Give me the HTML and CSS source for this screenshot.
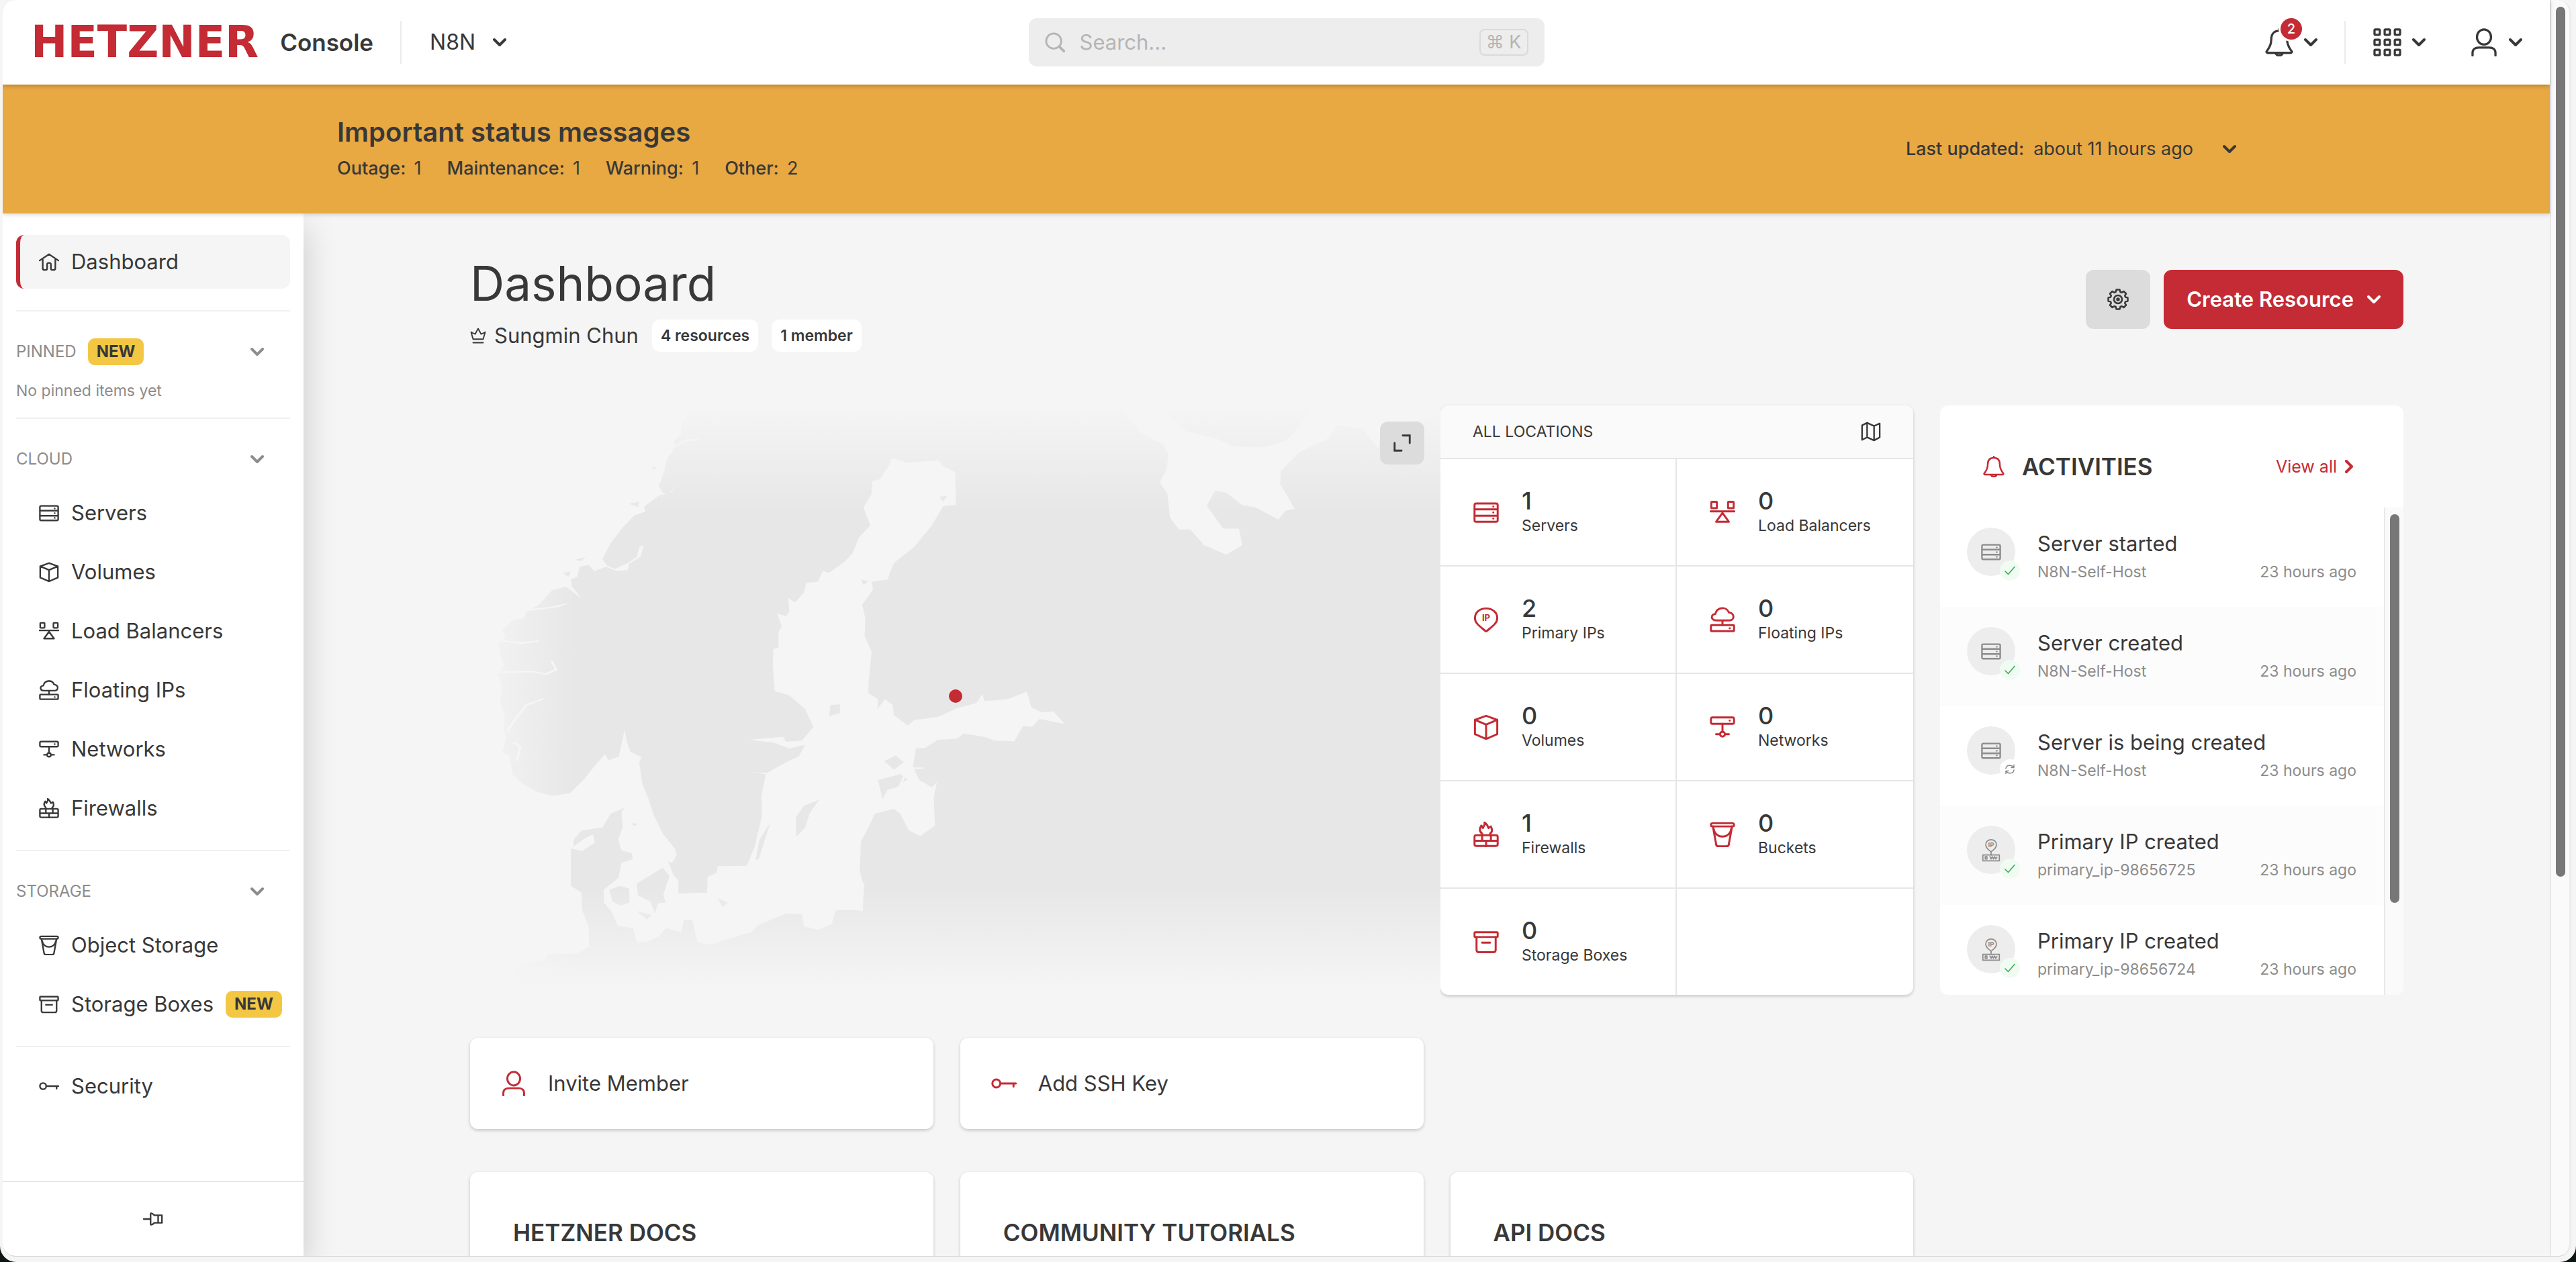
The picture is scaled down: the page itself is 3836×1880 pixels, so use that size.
FILE: index.html
```
<!DOCTYPE html>
<html lang="en">

<head>
    <meta charset="UTF-8">
    <meta name="viewport" content="width=device-width, initial-scale=1.0">
    <title>Hetzner Console</title>
    <link rel="stylesheet" href="styles.css">
</head>

<body>
    <!-- icon set -->
    <svg class="sprite" aria-hidden="true">
        <symbol id="i-chevron" viewBox="0 0 20 20"><path d="M2 6l8 8 8-8" stroke-width="4"/></symbol>
        <symbol id="i-search" viewBox="0 0 32 32"><circle cx="14" cy="14" r="12"/><path d="M23 23l8 8" stroke-width="4"/></symbol>
        <symbol id="i-bell" viewBox="0 0 32 32"><path d="M16 1v2M16 3c-6 0-9 4-9 10 0 7-3 10-5 13-1 1 0 2 1 2h26c1 0 2-1 1-2-2-3-5-6-5-13 0-6-3-10-9-10zM12 28c0 4 8 4 8 0"/></symbol>
        <symbol id="i-grid" viewBox="0 0 32 32"><rect x="1.5" y="1.5" width="6" height="6" rx="1"/><rect x="13" y="1.5" width="6" height="6" rx="1"/><rect x="24.5" y="1.5" width="6" height="6" rx="1"/><rect x="1.5" y="13" width="6" height="6" rx="1"/><rect x="13" y="13" width="6" height="6" rx="1"/><rect x="24.5" y="13" width="6" height="6" rx="1"/><rect x="1.5" y="24.5" width="6" height="6" rx="1"/><rect x="13" y="24.5" width="6" height="6" rx="1"/><rect x="24.5" y="24.5" width="6" height="6" rx="1"/></symbol>
        <symbol id="i-user" viewBox="0 0 32 32"><ellipse cx="16" cy="10" rx="8" ry="8.5"/><path d="M3 31v-3c0-4 3-6 7-6h12c4 0 7 2 7 6v3"/></symbol>
        <symbol id="i-home" viewBox="0 0 32 32"><path d="M1 14L16 4l15 10M6 12v14c0 2 1 3 3 3h2c1 0 2-1 2-2v-7c0-3 6-3 6 0v7c0 1 1 2 2 2h2c2 0 3-1 3-3V12"/></symbol>
        <symbol id="i-server" viewBox="0 0 32 32"><rect x="1.5" y="5" width="29" height="23" rx="2"/><path d="M2 12.500h28M2 20.500h28M25 9h.1M25 16.500h.1M25 24h.1"/></symbol>
        <symbol id="i-volume" viewBox="0 0 32 32"><path d="M16 2l14 5v18l-14 6-14-6V7zM2 7l14 6 14-6M16 13v18"/></symbol>
        <symbol id="i-balancer" viewBox="0 0 32 32"><rect x="2" y="3" width="7" height="8" rx="1"/><rect x="23" y="3" width="7" height="8" rx="1"/><path d="M1 15h30M16 17l8 11H8z"/></symbol>
        <symbol id="i-floating" viewBox="0 0 32 32"><path d="M8 17c-7 0-7-8-1-8 2-9 14-10 17-2 8 1 7 10 1 10zM16 17v6"/><rect x="1.5" y="23" width="29" height="7.5" rx="1"/><path d="M25 27h.1"/></symbol>
        <symbol id="i-network" viewBox="0 0 32 32"><rect x="1.5" y="4" width="29" height="8" rx="2"/><path d="M25 8h.1M16 12v10M8 25h5M19 25h5"/><circle cx="16" cy="25" r="3"/></symbol>
        <symbol id="i-firewall" viewBox="0 0 32 32"><rect x="1.5" y="17" width="29" height="13.5" rx="2"/><path d="M2 24h28M11 17v7M22 17v7M16 24v7M11 15c-4-3-3-7-1-10l2 3c1-3 3-4 2-7 3 2 4 4 5 7l3-2c2 4 2 7-1 9"/></symbol>
        <symbol id="i-bucket" viewBox="0 0 32 32"><rect x="1.5" y="2" width="29" height="4" rx="2"/><path d="M4 6l4 22c0 2 1 3 3 3h10c2 0 3-1 3-3l4-22M5 9c2 13 20 13 22 0"/></symbol>
        <symbol id="i-storage" viewBox="0 0 32 32"><rect x="1.5" y="4" width="29" height="6" rx="1"/><path d="M4 10v16c0 2 1 3 3 3h18c2 0 3-1 3-3V10M11 17h10"/></symbol>
        <symbol id="i-key" viewBox="0 0 32 32"><circle cx="6.5" cy="16" r="5"/><path d="M12 16h19M28 16v4"/></symbol>
        <symbol id="i-pin" viewBox="0 0 32 32"><path d="M1 16h11M12 8v16c0 3 4 0 6-2h12V10H18c-2-2-6-5-6-2zM24 10v12"/></symbol>
        <symbol id="i-crown" viewBox="0 0 32 32"><path d="M6 23L2 9l8 4 6-11 6 11 8-4-4 14zM6 30h20"/></symbol>
        <symbol id="i-gear" viewBox="-16 -16 32 32"><path d="M-3.400-11L-2.500-14.500H2.500L3.400-11 5.400-10.200 8.500-12 12-8.500 10.200-5.400 11-3.400 14.500-2.500V2.500L11 3.400 10.200 5.400 12 8.500 8.500 12 5.400 10.200 3.400 11 2.500 14.500H-2.500L-3.400 11-5.400 10.200-8.500 12-12 8.500-10.200 5.400-11 3.400-14.500 2.500V-2.500L-11-3.400-10.200-5.400-12-8.500-8.500-12-5.400-10.200z"/><circle r="6"/><circle r="1.500"/></symbol>
        <symbol id="i-expand" viewBox="0 0 32 32"><path d="M17 4h11v12M4 16v12h11" stroke-linejoin="miter"/></symbol>
        <symbol id="i-map" viewBox="0 0 32 32"><path d="M2 6l8-4 11 5 9-4v22l-9 5-11-5-8 4zM10 2v23M21 7v23"/></symbol>
        <symbol id="i-check" viewBox="0 0 32 32"><path d="M2 18l9 9L30 5"/></symbol>
        <symbol id="i-sync" viewBox="0 0 32 32"><path d="M4 14C5 3 20 1 27 10M28 3v8h-8M28 18C27 29 12 31 5 22M4 29v-8h8"/></symbol>
    </svg>

    <div class="window">
        <div class="app">
            <header class="topbar">
                <div class="topbar-left">
                    <a class="brand" href="#"><span class="logo">HETZNER</span><span class="product">Console</span></a>
                    <span class="separator"></span>
                    <button class="picker" type="button">N8N <svg class="chevron"><use href="#i-chevron"/></svg></button>
                </div>
                <label class="search">
                    <svg class="icon search-icon"><use href="#i-search"/></svg>
                    <input type="search" placeholder="Search..." aria-label="Search">
                    <kbd>⌘ K</kbd>
                </label>
                <div class="topbar-right">
                    <button class="tool" type="button" aria-label="Notifications">
                        <span class="bell"><svg class="icon"><use href="#i-bell"/></svg><span class="count">2</span></span>
                        <svg class="chevron"><use href="#i-chevron"/></svg>
                    </button>
                    <span class="separator"></span>
                    <button class="tool" type="button" aria-label="Products">
                        <svg class="icon"><use href="#i-grid"/></svg>
                        <svg class="chevron"><use href="#i-chevron"/></svg>
                    </button>
                    <button class="tool" type="button" aria-label="Account">
                        <svg class="icon"><use href="#i-user"/></svg>
                        <svg class="chevron"><use href="#i-chevron"/></svg>
                    </button>
                </div>
            </header>

            <section class="status">
                <div>
                    <h2>Important status messages</h2>
                    <ul class="status-counts">
                        <li>Outage: <span>1</span></li>
                        <li>Maintenance: <span>1</span></li>
                        <li>Warning: <span>1</span></li>
                        <li>Other: <span>2</span></li>
                    </ul>
                </div>
                <button class="status-toggle" type="button">
                    <span>Last updated:</span>
                    <time>about 11 hours ago</time>
                    <svg class="chevron"><use href="#i-chevron"/></svg>
                </button>
            </section>

            <div class="columns">
                <aside class="sidebar">
                    <nav>
                        <div class="group">
                            <a class="item active" href="#"><svg class="icon"><use href="#i-home"/></svg>Dashboard</a>
                        </div>
                        <div class="group">
                            <button class="group-title" type="button">PINNED <span class="new">NEW</span><svg class="chevron"><use href="#i-chevron"/></svg></button>
                            <p class="empty">No pinned items yet</p>
                        </div>
                        <div class="group">
                            <button class="group-title" type="button">CLOUD<svg class="chevron"><use href="#i-chevron"/></svg></button>
                            <a class="item" href="#"><svg class="icon"><use href="#i-server"/></svg>Servers</a>
                            <a class="item" href="#"><svg class="icon"><use href="#i-volume"/></svg>Volumes</a>
                            <a class="item" href="#"><svg class="icon"><use href="#i-balancer"/></svg>Load Balancers</a>
                            <a class="item" href="#"><svg class="icon"><use href="#i-floating"/></svg>Floating IPs</a>
                            <a class="item" href="#"><svg class="icon"><use href="#i-network"/></svg>Networks</a>
                            <a class="item" href="#"><svg class="icon"><use href="#i-firewall"/></svg>Firewalls</a>
                        </div>
                        <div class="group">
                            <button class="group-title" type="button">STORAGE<svg class="chevron"><use href="#i-chevron"/></svg></button>
                            <a class="item" href="#"><svg class="icon"><use href="#i-bucket"/></svg>Object Storage</a>
                            <a class="item" href="#"><svg class="icon"><use href="#i-storage"/></svg>Storage Boxes<span class="new">NEW</span></a>
                        </div>
                        <div class="group">
                            <a class="item" href="#"><svg class="icon"><use href="#i-key"/></svg>Security</a>
                        </div>
                    </nav>
                    <button class="unpin" type="button" aria-label="Collapse menu"><svg class="icon"><use href="#i-pin"/></svg></button>
                </aside>

                <main class="content">
                    <div class="page-head">
                        <div>
                            <h1>Dashboard</h1>
                            <div class="owner">
                                <svg class="icon"><use href="#i-crown"/></svg>
                                <span class="owner-name">Sungmin Chun</span>
                                <span class="pill">4 resources</span>
                                <span class="pill">1 member</span>
                            </div>
                        </div>
                        <div class="actions">
                            <button class="settings" type="button" aria-label="Settings"><svg class="icon"><use href="#i-gear"/></svg></button>
                            <button class="create" type="button">Create Resource <svg class="chevron"><use href="#i-chevron"/></svg></button>
                        </div>
                    </div>

                    <div class="overview">
                        <div class="map">
                            <svg class="map-drawing" viewBox="21 41 1532 1493" preserveAspectRatio="none" aria-hidden="true">
                                <defs>
                                    <linearGradient id="fade-top" x1="0" y1="0" x2="0" y2="1"><stop offset="0" stop-color="#f5f5f5"/><stop offset="1" stop-color="#f5f5f5" stop-opacity="0"/></linearGradient>
                                    <linearGradient id="fade-bottom" x1="0" y1="1" x2="0" y2="0"><stop offset="0" stop-color="#f5f5f5"/><stop offset="1" stop-color="#f5f5f5" stop-opacity="0"/></linearGradient>
                                    <linearGradient id="fade-left" x1="0" y1="0" x2="1" y2="0"><stop offset="0" stop-color="#f5f5f5"/><stop offset="1" stop-color="#f5f5f5" stop-opacity="0"/></linearGradient>
                                </defs>
                                <path class="land" d="M375 41L355 85 354 115 344 130 340 160 332 175 328 205 319 245 325 262 334 267 348 240 338 262 318 270 296 297 298 310 280 320 262 350 243 390 230 430 238 448 250 455 270 440 284 425 288 400 295 395 290 425 272 442 270 458 252 460 236 450 217 460 208 445 194 450 190 475 180 482 182 500 197 530 172 500 150 510 130 545 118 556 145 552 178 541 160 552 110 562 106 580 88 585 72 610 77 625 66 645 70 680 75 700 66 720 72 760 68 790 76 830 73 860 78 880 72 920 84 930 88 975 104 1000 127 1020 150 1030 178 1024 200 990 220 950 234 925 240 940 256 930 262 885 265 862 268 890 274 918 292 932 288 945 293 1000 302 1035 310 1075 325 1125 345 1165 347 1180 340 1200 334 1196 342 1230 350 1245 350 1278 380 1275 395 1276 396 1235 410 1225 412 1208 458 1207 470 1160 482 1080 481 1030 488 975 465 970 490 972 520 945 540 930 550 900 525 910 500 895 462 888 515 880 520 893 545 890 563 855 550 810 525 775 502 765 499 700 500 658 508 655 508 615 513 600 506 568 520 575 525 562 523 528 534 540 548 515 552 490 570 488 578 460 588 465 612 437 625 415 635 375 653 345 642 300 655 265 656 232 668 228 684 190 687 175 712 186 760 180 768 195 787 210 788 293 768 296 750 345 722 400 690 440 680 482 655 488 657 508 640 545 645 580 644 625 655 665 650 745 650 770 665 785 664 810 676 785 688 800 690 825 712 852 722 838 760 830 790 808 820 795 830 772 833 790 870 785 900 766 907 805 922 818 942 816 960 848 920 835 908 855 894 853 880 892 850 890 832 880 800 872 790 885 760 888 740 908 725 910 720 955 730 990 750 1008 758 995 753 1035 755 1105 732 1132 714 1118 700 1075 690 1063 660 1075 650 1110 638 1145 636 1220 643 1258 641 1322 620 1318 598 1320 592 1355 570 1369 548 1360 545 1330 520 1328 475 1358 465 1375 400 1407 380 1400 372 1345 358 1345 355 1375 330 1365 320 1385 300 1400 285 1402 278 1365 255 1360 243 1320 232 1300 232 1268 255 1238 260 1200 278 1190 276 1175 260 1168 255 1140 262 1110 260 1070 265 1060 243 1075 230 1110 197 1118 185 1140 184 1158 205 1135 215 1128 218 1148 198 1170 180 1163 180 1258 197 1275 198 1320 208 1360 209 1412 190 1430 145 1430 140 1445 95 1460 90 1534H1553V41z"/>
                                <path class="land" d="M572 1040L548 1055 535 1085 536 1133 550 1110 557 1075zM495 1098L478 1140 472 1192 477 1190zM665 990L700 975 712 988 695 1008 680 1015 672 1038 668 1010zM675 942L693 928 706 945 690 964zM284 1252L325 1212 336 1232 326 1280 330 1300 318 1302 313 1328 306 1298 286 1282zM241 1268L258 1258 272 1265 273 1300 258 1308 246 1298zM412 1290L428 1300 420 1312zM590 800L605 798 605 820 588 828zM272 290L288 285 286 298zM186 432L203 425 197 435zM762 272L774 270 768 285zM276 1100L286 1100 281 1107zM308 195L316 197 311 205zM168 465L180 462 176 476zM638 482L650 486 642 496zM284 1322L308 1332 300 1343z"/>
                                <path class="water" d="M1045 41L1080 110 1115 140 1124 165 1120 205 1110 235 1122 265 1126 325 1140 355 1158 355 1180 395 1215 419 1240 395 1235 353 1210 353 1184 295 1197 257 1215 262 1240 293 1262 300 1297 330 1308 308 1323 303 1300 240 1301 207 1330 160 1375 125 1390 92 1430 100 1455 150 1460 90 1553 70V41z"/>
                                <path class="land" d="M1110 41L1150 105 1200 125 1225 145 1275 147 1310 130 1335 85 1350 41z"/>
                                <path class="fjord" d="M72 637L100 643 128 638M62 717L120 715 140 722 157 710 150 690M80 865L95 830 110 800 135 785M95 940L100 905 90 895M338 150L362 130 380 127M642 1255L622 1312M700 1005L712 960 735 960"/>
                                <rect x="21" y="41" width="1532" height="265" fill="url(#fade-top)"/>
                                <rect x="21" y="1260" width="1532" height="262" fill="url(#fade-bottom)"/>
                                <rect x="21" y="1520" width="1532" height="20" fill="#f5f5f5"/>
                                <rect x="21" y="41" width="165" height="1493" fill="url(#fade-left)"/>
                            </svg>
                            <span class="marker"></span>
                            <button class="expand" type="button" aria-label="Expand map"><svg class="icon"><use href="#i-expand"/></svg></button>
                        </div>

                        <section class="locations">
                            <h2>ALL LOCATIONS <svg class="icon"><use href="#i-map"/></svg></h2>
                            <div class="tiles">
                                <a class="tile" href="#"><svg class="icon"><use href="#i-server"/></svg><span><b>1</b>Servers</span></a>
                                <a class="tile" href="#"><svg class="icon"><use href="#i-balancer"/></svg><span><b>0</b>Load Balancers</span></a>
                                <a class="tile" href="#"><svg class="icon" viewBox="0 0 32 32"><path d="M16 31C9 25 2 21 2 14 2 7 8 2 16 2s14 5 14 12c0 7-7 11-14 17z"/><text x="16" y="18" class="ip-text">IP</text></svg><span><b>2</b>Primary IPs</span></a>
                                <a class="tile" href="#"><svg class="icon"><use href="#i-floating"/></svg><span><b>0</b>Floating IPs</span></a>
                                <a class="tile" href="#"><svg class="icon"><use href="#i-volume"/></svg><span><b>0</b>Volumes</span></a>
                                <a class="tile" href="#"><svg class="icon"><use href="#i-network"/></svg><span><b>0</b>Networks</span></a>
                                <a class="tile" href="#"><svg class="icon"><use href="#i-firewall"/></svg><span><b>1</b>Firewalls</span></a>
                                <a class="tile" href="#"><svg class="icon"><use href="#i-bucket"/></svg><span><b>0</b>Buckets</span></a>
                                <a class="tile" href="#"><svg class="icon"><use href="#i-storage"/></svg><span><b>0</b>Storage Boxes</span></a>
                                <div class="tile"></div>
                            </div>
                        </section>

                        <section class="activities">
                            <div class="activities-head">
                                <svg class="icon"><use href="#i-bell"/></svg>
                                <h2>ACTIVITIES</h2>
                                <a href="#">View all <svg class="chevron"><use href="#i-chevron"/></svg></a>
                            </div>
                            <div class="activities-body">
                                <ul class="feed">
                                    <li>
                                        <span class="avatar"><svg class="icon"><use href="#i-server"/></svg><span class="state done"><svg><use href="#i-check"/></svg></span></span>
                                        <div class="event"><p>Server started</p><div><span>N8N-Self-Host</span><time>23 hours ago</time></div></div>
                                    </li>
                                    <li>
                                        <span class="avatar"><svg class="icon"><use href="#i-server"/></svg><span class="state done"><svg><use href="#i-check"/></svg></span></span>
                                        <div class="event"><p>Server created</p><div><span>N8N-Self-Host</span><time>23 hours ago</time></div></div>
                                    </li>
                                    <li>
                                        <span class="avatar"><svg class="icon"><use href="#i-server"/></svg><span class="state"><svg><use href="#i-sync"/></svg></span></span>
                                        <div class="event"><p>Server is being created</p><div><span>N8N-Self-Host</span><time>23 hours ago</time></div></div>
                                    </li>
                                    <li>
                                        <span class="avatar"><svg class="icon tall" viewBox="0 0 32 40"><path d="M16 23c-4-4-9-6-9-12 0-12 18-12 18 0 0 6-5 8-9 12zM16 23v5"/><rect x="2" y="28" width="28" height="10"/><path d="M6 31h3v4H6zM14 31l2 4 2-4 2 4 2-4 2 4 2-3"/><text x="16" y="15" class="ip-text">IP</text></svg><span class="state done"><svg><use href="#i-check"/></svg></span></span>
                                        <div class="event"><p>Primary IP created</p><div><span>primary_ip-98656725</span><time>23 hours ago</time></div></div>
                                    </li>
                                    <li>
                                        <span class="avatar"><svg class="icon tall" viewBox="0 0 32 40"><path d="M16 23c-4-4-9-6-9-12 0-12 18-12 18 0 0 6-5 8-9 12zM16 23v5"/><rect x="2" y="28" width="28" height="10"/><path d="M6 31h3v4H6zM14 31l2 4 2-4 2 4 2-4 2 4 2-3"/><text x="16" y="15" class="ip-text">IP</text></svg><span class="state done"><svg><use href="#i-check"/></svg></span></span>
                                        <div class="event"><p>Primary IP created</p><div><span>primary_ip-98656724</span><time>23 hours ago</time></div></div>
                                    </li>
                                </ul>
                                <div class="scrollbar"><div class="thumb feed-thumb"></div></div>
                            </div>
                        </section>
                    </div>

                    <div class="cards">
                        <a class="card quick" href="#"><svg class="icon"><use href="#i-user"/></svg>Invite Member</a>
                        <a class="card quick" href="#"><svg class="icon"><use href="#i-key"/></svg>Add SSH Key</a>
                    </div>
                    <div class="cards">
                        <section class="card docs"><h2>HETZNER DOCS</h2></section>
                        <section class="card docs"><h2>COMMUNITY TUTORIALS</h2></section>
                        <section class="card docs"><h2>API DOCS</h2></section>
                    </div>
                </main>
            </div>
        </div>
        <div class="scrollbar"><div class="thumb page-thumb"></div></div>
    </div>
</body>

</html>
```
FILE: styles.css
```
* {
    box-sizing: border-box;
}

html {
    background: #0c1612;
}

body {
    margin: 0;
    height: 100vh;
    padding: 0 7px 8px 4px;
    overflow: hidden;
    background: #f5f5f5;
    border-radius: 0 0 24px 24px;
    font-family: Inter, "Noto Sans", sans-serif;
    font-size: 31px;
    line-height: 40px;
    color: #383838;
}

h1, h2, p, ul {
    margin: 0;
    padding: 0;
}

h2 {
    font-size: 35px;
    font-weight: 600;
}

ul {
    list-style: none;
}

a {
    color: inherit;
    text-decoration: none;
}

button {
    padding: 0;
    border: 0;
    background: none;
    color: inherit;
    font: inherit;
    cursor: pointer;
}

.sprite {
    position: absolute;
    width: 0;
    height: 0;
}

svg {
    display: block;
    flex: none;
    fill: none;
    stroke: currentColor;
    stroke-width: 2.5;
    stroke-linecap: round;
    stroke-linejoin: round;
}

.icon {
    width: 30px;
    height: 30px;
}

.chevron {
    width: 20px;
    height: 20px;
}

.ip-text {
    fill: currentColor;
    stroke: none;
    font-size: 11px;
    font-weight: 700;
    text-anchor: middle;
}

/* window */
.window {
    display: flex;
    height: 100%;
    overflow: hidden;
    background: #f5f5f5;
    border-right: 3px solid #ebebeb;
    border-bottom: 1px solid #d5d5d5;
    border-radius: 20px;
}

.app {
    flex: 1;
    min-width: 0;
    display: flex;
    flex-direction: column;
}

.scrollbar {
    width: 29px;
    flex: none;
    padding: 10px 6px;
    background: #fafafa;
    border-left: 2px solid #e8e8e8;
}

.thumb {
    width: 14px;
    margin: 0 auto;
    background: #777;
    border-radius: 7px;
}

.page-thumb {
    height: 70%;
}

/* top bar */
.topbar {
    position: relative;
    z-index: 3;
    display: grid;
    grid-template-columns: 1fr 768px 1fr;
    align-items: center;
    height: 126px;
    flex: none;
    padding: 0 12px 0 42px;
    background: #fff;
    box-shadow: 0 2px 6px rgba(0, 0, 0, 0.25);
}

.topbar-left,
.topbar-right,
.brand,
.picker,
.tool {
    display: flex;
    align-items: center;
}

.brand {
    gap: 32px;
}

.logo {
    color: #c42b34;
    font-family: "DejaVu Sans", sans-serif;
    font-weight: 700;
    font-size: 65px;
}

.product {
    font-weight: 600;
    font-size: 35px;
}

.separator {
    width: 2px;
    height: 64px;
    background: #ebebeb;
}

.topbar-left .separator {
    margin: 0 42px 0 40px;
}

.picker {
    gap: 26px;
    font-size: 32px;
}

.search {
    display: flex;
    align-items: center;
    gap: 22px;
    height: 72px;
    padding: 0 24px;
    background: #ededed;
    border-radius: 12px;
    color: #b5b5b5;
}

.search-icon {
    stroke-width: 3;
}

.search input {
    flex: 1;
    min-width: 0;
    padding: 0;
    border: 0;
    outline: 0;
    background: none;
    font: inherit;
    color: #383838;
}

.search input::placeholder {
    color: #b5b5b5;
}

kbd {
    padding: 0 8px;
    border: 2px solid #dadada;
    border-radius: 8px;
    font-family: Inter, "DejaVu Sans", sans-serif;
    font-size: 27px;
    line-height: 36px;
}

.topbar-right {
    justify-content: flex-end;
    padding-right: 29px;
}

.topbar-right .icon {
    width: 42px;
    height: 42px;
}

.tool {
    gap: 16px;
}

.tool + .tool {
    margin-left: 66px;
}

.topbar-right .separator {
    margin: 0 41px 0 40px;
}

.bell {
    position: relative;
}

.count {
    position: absolute;
    top: -15px;
    right: -13px;
    width: 32px;
    height: 32px;
    background: #c42b34;
    border-radius: 50%;
    box-shadow: 0 0 0 3px #fff;
    color: #fff;
    font-size: 20px;
    font-weight: 500;
    line-height: 32px;
    text-align: center;
}

/* status banner */
.status {
    position: relative;
    z-index: 2;
    display: flex;
    justify-content: space-between;
    align-items: center;
    height: 192px;
    flex: none;
    padding: 0 467px 0 498px;
    background: #e8a842;
    box-shadow: 0 2px 6px rgba(0, 0, 0, 0.15);
    font-size: 27px;
}

.status h2 {
    margin-bottom: 10px;
    font-size: 40px;
    line-height: 48px;
}

.status-counts {
    display: flex;
    gap: 38px;
    font-weight: 500;
}

.status-counts span {
    margin-left: 5px;
    font-weight: 400;
}

.status-toggle {
    display: flex;
    align-items: center;
    gap: 14px;
}

.status-toggle span {
    font-weight: 500;
}

.status-toggle .chevron {
    margin-left: 30px;
}

.columns {
    flex: 1;
    min-height: 0;
    display: flex;
}

/* sidebar */
.sidebar {
    display: flex;
    flex-direction: column;
    justify-content: space-between;
    width: 448px;
    flex: none;
    background: #fff;
    box-shadow: 0 20px 48px rgba(0, 0, 0, 0.18);
}

.sidebar nav {
    padding: 8px 20px 0;
}

.group {
    padding: 24px 0 18px;
}

.group:first-child {
    padding: 24px 0 32px;
}

.group + .group {
    border-top: 2px solid #f0f0f0;
}

.group:last-child {
    padding: 14px 0;
}

.item {
    display: flex;
    align-items: center;
    gap: 18px;
    height: 88px;
    padding-left: 34px;
    border-radius: 12px;
}

.item.active {
    height: 80px;
    padding-left: 28px;
    background: #f5f5f5;
    border-left: 6px solid #c42b34;
}

.group-title {
    display: flex;
    align-items: center;
    width: 100%;
    height: 72px;
    padding-right: 39px;
    color: #8c8c8c;
    font-size: 24px;
}

.group-title .chevron {
    margin-left: auto;
}

.new {
    margin-left: 17px;
    padding: 0 13px;
    background: #f3c744;
    border-radius: 10px;
    color: #383838;
    font-size: 24px;
    font-weight: 700;
}

.item .new {
    margin-left: 0;
}

.empty {
    color: #8c8c8c;
    font-size: 23px;
    line-height: 44px;
}

.unpin {
    display: flex;
    align-items: center;
    justify-content: center;
    height: 112px;
    border-top: 2px solid #e6e6e6;
}

/* main content */
.content {
    flex: 1;
    min-width: 0;
    padding: 60px 218px 0 248px;
    overflow: hidden;
}

.page-head {
    display: flex;
    justify-content: space-between;
    align-items: center;
    margin-bottom: 80px;
}

h1 {
    margin-bottom: 10px;
    font-size: 71px;
    font-weight: 400;
    line-height: 88px;
}

.owner {
    display: flex;
    align-items: center;
}

.owner .icon {
    width: 24px;
    height: 24px;
    margin-right: 12px;
}

.pill {
    margin-left: 20px;
    padding: 0 13px;
    background: #fff;
    border-radius: 12px;
    font-size: 23px;
    font-weight: 600;
    line-height: 48px;
}

.actions {
    display: flex;
    gap: 20px;
    margin-bottom: 10px;
}

.settings,
.create {
    display: flex;
    align-items: center;
    justify-content: center;
    height: 88px;
    border-radius: 12px;
}

.settings {
    width: 96px;
    background: #dcdcdc;
}

.settings .icon {
    width: 32px;
    height: 32px;
}

.create {
    gap: 20px;
    padding: 0 34px;
    background: #c42b34;
    color: #fff;
    font-weight: 600;
}

.overview {
    display: grid;
    grid-template-columns: minmax(0, 1fr) 704px 730px;
    margin-bottom: 64px;
}

.map {
    position: relative;
}

.map-drawing {
    position: absolute;
    width: 100%;
    height: 100%;
    stroke: none;
}

.land {
    fill: #e7e7e7;
}

.water {
    fill: #f5f5f5;
}

.fjord {
    stroke: #f5f5f5;
    stroke-width: 4;
}

.marker {
    position: absolute;
    left: 50%;
    top: 49%;
    width: 20px;
    height: 20px;
    margin: -7px -10px;
    background: #c42b34;
    border-radius: 50%;
}

.expand {
    position: absolute;
    top: 24px;
    right: 24px;
    display: flex;
    align-items: center;
    justify-content: center;
    width: 66px;
    height: 64px;
    background: #dcdcdc;
    border-radius: 12px;
}

.expand .icon {
    stroke-width: 3;
}

.locations,
.card {
    background: #fff;
    border-radius: 12px;
    box-shadow: 0 2px 5px rgba(0, 0, 0, 0.2);
}

.locations {
    overflow: hidden;
}

.locations h2 {
    display: flex;
    align-items: center;
    justify-content: space-between;
    height: 78px;
    padding: 0 48px;
    background: #fafafa;
    font-size: 23px;
    font-weight: 400;
}

.tiles {
    display: grid;
    grid-template-columns: 1fr 1fr;
}

.tile {
    display: flex;
    align-items: center;
    gap: 34px;
    height: 160px;
    padding-left: 49px;
    border-top: 2px solid #e6e6e6;
    font-size: 23px;
    line-height: 34px;
}

.tile:nth-child(odd) {
    border-right: 2px solid #e6e6e6;
}

.tile .icon {
    width: 38px;
    height: 38px;
    color: #c42b34;
}

.tile b {
    display: block;
    font-size: 36px;
    font-weight: 500;
    line-height: 40px;
}

.activities {
    display: flex;
    flex-direction: column;
    margin-left: 40px;
    overflow: hidden;
    background: #fff;
    border-radius: 12px;
}

.activities-head {
    display: flex;
    align-items: center;
    gap: 26px;
    padding: 71px 71px 41px 64px;
}

.activities-head > .icon,
.activities-head a {
    color: #c42b34;
}

.activities-head > .icon {
    width: 32px;
    height: 32px;
}

.activities-head a {
    display: flex;
    align-items: center;
    gap: 8px;
    margin-left: auto;
    font-size: 25px;
}

.activities-head .chevron {
    transform: rotate(-90deg);
}

.activities-body {
    display: flex;
    flex: 1 1 0;
    min-height: 0;
    overflow: hidden;
}

.feed {
    flex: 1;
    min-width: 0;
}

.feed li {
    display: flex;
    align-items: flex-start;
    gap: 33px;
    height: 148px;
    padding: 30px 41px 0 40px;
}

.feed li:nth-child(even) {
    background: #fcfcfc;
}

.avatar {
    position: relative;
    display: flex;
    align-items: center;
    justify-content: center;
    width: 72px;
    height: 72px;
    flex: none;
    background: #ededed;
    border-radius: 50%;
    color: #8c8c8c;
}

.avatar .tall {
    width: 28px;
    height: 35px;
    stroke-width: 2;
}

.state {
    position: absolute;
    right: -7px;
    bottom: -7px;
    display: flex;
    align-items: center;
    justify-content: center;
    width: 30px;
    height: 30px;
    background: #fff;
    border-radius: 50%;
}

.state svg {
    width: 16px;
    height: 16px;
    stroke-width: 3;
}

.state.done {
    background: #f0fbf2;
    color: #35a853;
}

.event {
    flex: 1;
    padding-top: 4px;
}

.event p {
    margin-bottom: 2px;
}

.event div {
    display: flex;
    justify-content: space-between;
    color: #8c8c8c;
    font-size: 23px;
}

.feed-thumb {
    height: 82%;
}

.cards {
    display: grid;
    grid-template-columns: repeat(4, 1fr);
    gap: 40px;
    margin-bottom: 64px;
}

.quick {
    display: flex;
    align-items: center;
    gap: 32px;
    height: 136px;
    padding-left: 46px;
}

.quick .icon {
    width: 38px;
    height: 38px;
    color: #c42b34;
}

.docs {
    padding: 70px 64px 160px;
}
```
